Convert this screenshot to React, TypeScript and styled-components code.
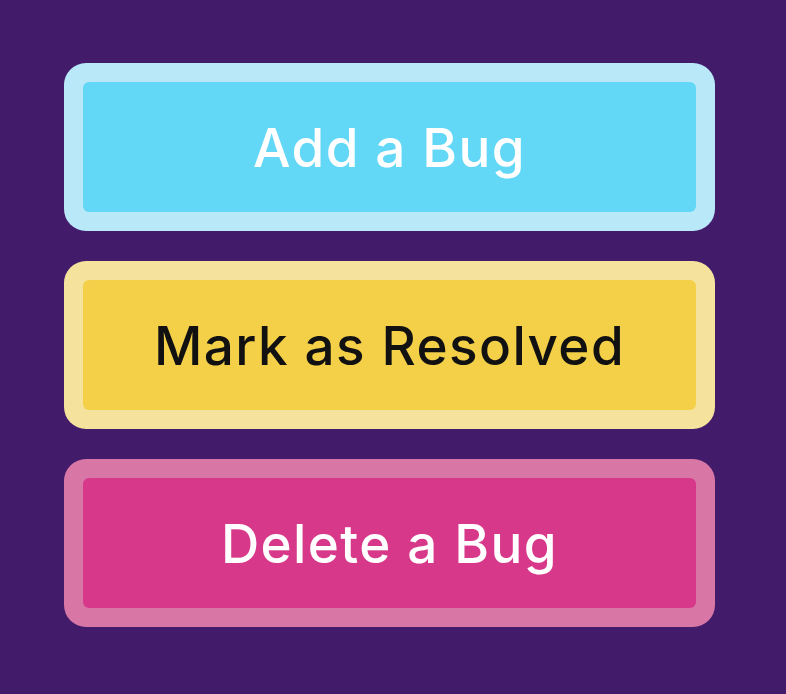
import React from "react";
import styled, { createGlobalStyle } from "styled-components";

const Global = createGlobalStyle`
  html, body {
    margin: 0;
    padding: 0;
    background: #421b6b;
  }
`;

const Page = styled.div`
  width: 786px;
  height: 694px;
  box-sizing: border-box;
  padding: 63px 71px 0 64px;
  display: flex;
  flex-direction: column;
  gap: 30px;
  background: #421b6b;
`;

type Tone = "blue" | "yellow" | "pink";

const palette: Record<Tone, { ring: string; face: string; text: string }> = {
  blue: { ring: "#b9e9f9", face: "#62d7f6", text: "#ffffff" },
  yellow: { ring: "#f4e29d", face: "#f4cf48", text: "#111111" },
  pink: { ring: "#d877a6", face: "#d8388a", text: "#ffffff" },
};

const Frame = styled.button<{ $tone: Tone }>`
  all: unset;
  box-sizing: border-box;
  display: flex;
  width: 651px;
  height: 168px;
  padding: 19px;
  border-radius: 22px;
  background: ${(p) => palette[p.$tone].ring};
  cursor: pointer;
`;

const Face = styled.span<{ $tone: Tone }>`
  flex: 1;
  display: flex;
  align-items: center;
  justify-content: center;
  border-radius: 6px;
  background: ${(p) => palette[p.$tone].face};
  color: ${(p) => palette[p.$tone].text};
  font-family: "Inter", "Noto Sans", sans-serif;
  font-weight: 500;
  font-size: 53px;
  letter-spacing: 1.4px;
  padding-top: 1px;
`;

const buttons: { label: string; tone: Tone }[] = [
  { label: "Add a Bug", tone: "blue" },
  { label: "Mark as Resolved", tone: "yellow" },
  { label: "Delete a Bug", tone: "pink" },
];

export default function App() {
  return (
    <>
      <Global />
      <Page>
        {buttons.map((b) => (
          <Frame key={b.label} $tone={b.tone}>
            <Face $tone={b.tone}>{b.label}</Face>
          </Frame>
        ))}
      </Page>
    </>
  );
}
